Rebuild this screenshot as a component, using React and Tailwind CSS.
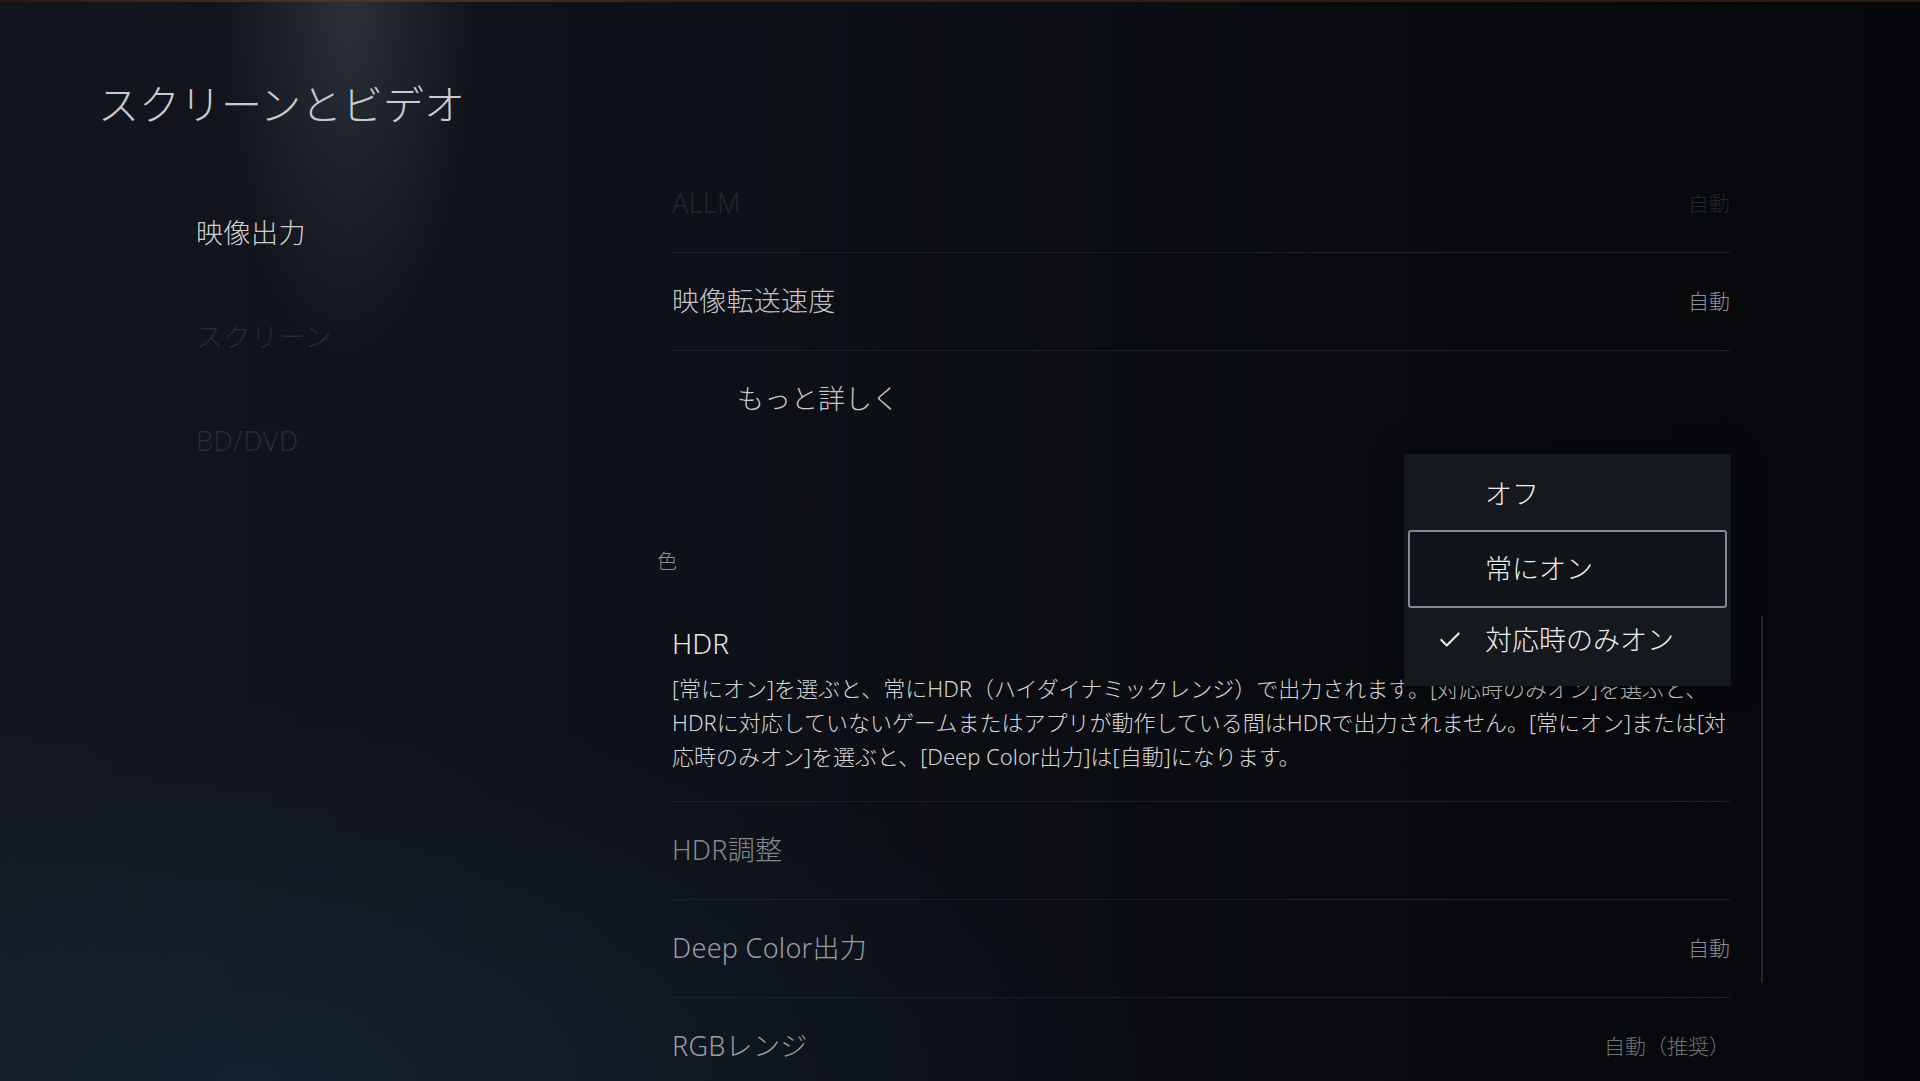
import { Check } from 'lucide-react'

const NAV = [
  { label: '映像出力', active: true },
  { label: 'スクリーン' },
  { label: 'BD/DVD' },
]

const OPTIONS = [
  { label: 'オフ' },
  { label: '常にオン', focused: true },
  { label: '対応時のみオン', checked: true },
]

function Row({ label, value, labelClass = 'text-[#c2c4c8]', valueClass = 'text-[#8e9196]', border = true }) {
  return (
    <div className={`flex h-[98px] items-center justify-between pb-[2px] ${border ? 'border-b border-[#1c1f25]' : ''}`}>
      <span className={`text-[27px] leading-[36px] tracking-[0.01em] ${labelClass}`}>{label}</span>
      {value && <span className={`text-[21px] leading-[28px] ${valueClass}`}>{value}</span>}
    </div>
  )
}

export default function App() {
  return (
    <div className="relative h-[1081px] w-full overflow-hidden font-['Noto_Sans','Noto_Sans_CJK_JP',sans-serif] font-light [background-image:radial-gradient(ellipse_130px_360px_at_350px_0px,rgba(150,160,180,0.2),transparent),radial-gradient(ellipse_900px_380px_at_250px_1081px,rgba(22,42,62,0.55),transparent),linear-gradient(90deg,#13161d_0%,#0e1117_35%,#090b0f_70%,#07080b_100%)]">
      <div className="h-[2px] bg-[linear-gradient(90deg,#2a1712,#55302a_18%,#3a2018_35%,#2e1a14_100%)]" />

      <header className="h-[153px] pl-[98px] pt-[78px]">
        <h1 className="text-[41px] leading-[49px] text-[#c9cbcf]">スクリーンとビデオ</h1>
      </header>

      <div className="flex">
        <nav className="w-[672px] shrink-0 pl-[196px] pt-[26px]">
          {NAV.map(({ label, active }) => (
            <div
              key={label}
              className={`flex h-[104px] items-center text-[27px] tracking-[0.02em] ${active ? 'text-[#cfd0d2]' : 'text-[#272b32]'}`}
            >
              {label}
            </div>
          ))}
        </nav>

        <main className="w-[1058px] shrink-0">
          <Row label="ALLM" value="自動" labelClass="text-[#24272d]" valueClass="text-[#22252b]" />
          <Row label="映像転送速度" value="自動" />
          <div className="flex h-[98px] items-center pb-[2px] pl-[65px] text-[27px] text-[#c8c9cc]">もっと詳しく</div>

          <div className="-ml-[15px] mt-[99px] text-[20px] leading-[28px] text-[#8a8d92]">色</div>

          <div className="border-b border-[#1c1f25] pb-[28px] pt-[49px]">
            <div className="text-[28px] leading-[36px] text-[#e5e6e8]">HDR</div>
            <div className="mt-[10px] text-[22px] leading-[34px] text-[#d4d5d7]">
              <div className="whitespace-nowrap">[常にオン]を選ぶと、常にHDR（ハイダイナミックレンジ）で出力されます。[対応時のみオン]を選ぶと、</div>
              <div className="whitespace-nowrap">HDRに対応していないゲームまたはアプリが動作している間はHDRで出力されません。[常にオン]または[対</div>
              <div className="whitespace-nowrap">応時のみオン]を選ぶと、[Deep Color出力]は[自動]になります。</div>
            </div>
          </div>

          <Row label="HDR調整" labelClass="text-[#85898f]" />
          <Row label="Deep Color出力" value="自動" labelClass="text-[#9a9da2]" valueClass="text-[#8a8d92]" />
          <Row label="RGBレンジ" value="自動（推奨）" labelClass="text-[#9a9da2]" valueClass="text-[#6f7378]" border={false} />
        </main>

        <div className="ml-[31px] mt-[461px] h-[367px] w-[2px] bg-[#23262b]" />
      </div>

      <div className="absolute left-[1404px] top-[454px] w-[327px] bg-[#15181d] pb-[14px] pt-[4px] shadow-[0_0_24px_rgba(0,0,0,0.5)]">
        {OPTIONS.map(({ label, focused, checked }) =>
          focused ? (
            <div
              key={label}
              className="mx-[4px] flex h-[78px] items-center rounded-[3px] border-2 border-[#7d8b95] bg-[#111419] pl-[75px] text-[27px] text-[#eeeeee]"
            >
              {label}
            </div>
          ) : (
            <div
              key={label}
              className={`relative flex items-center pl-[81px] text-[27px] text-[#eeeeee] ${checked ? 'h-[64px]' : 'h-[72px]'}`}
            >
              {checked && <Check size={26} strokeWidth={2} className="absolute left-[33px] text-[#e8e8e8]" />}
              {label}
            </div>
          )
        )}
      </div>
    </div>
  )
}
